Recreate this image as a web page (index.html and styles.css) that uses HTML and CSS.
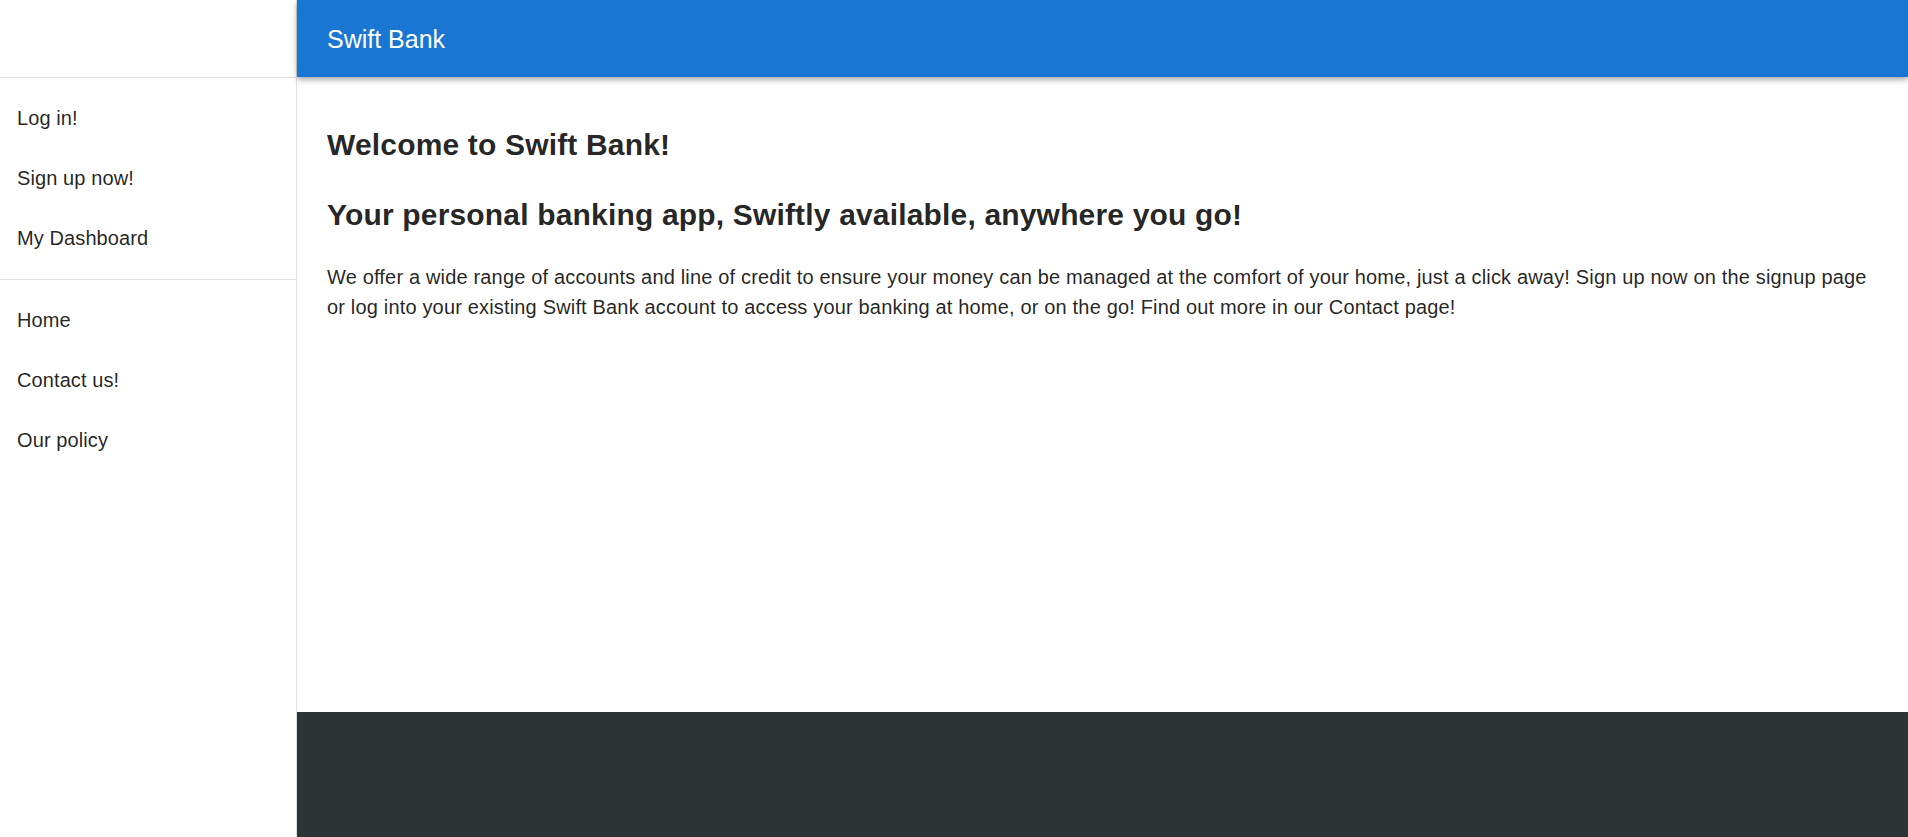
FILE: index.html
```html
<!DOCTYPE html>
<html lang="en">
<head>
<meta charset="utf-8">
<title>Swift Bank</title>
<link rel="stylesheet" href="styles.css">
</head>
<body>
<div class="app">
  <aside class="drawer">
    <div class="drawer-spacer"></div>
    <hr class="divider">
    <ul class="nav-list nav-list-first">
      <li class="nav-item">Log in!</li>
      <li class="nav-item">Sign up now!</li>
      <li class="nav-item">My Dashboard</li>
    </ul>
    <hr class="divider">
    <ul class="nav-list">
      <li class="nav-item">Home</li>
      <li class="nav-item">Contact us!</li>
      <li class="nav-item">Our policy</li>
    </ul>
  </aside>
  <div class="main-col">
    <header class="appbar">
      <div class="appbar-title">Swift Bank</div>
    </header>
    <main class="content">
      <h1 class="title">Welcome to Swift Bank!</h1>
      <h2 class="title title-2">Your personal banking app, Swiftly available, anywhere you go!</h2>
      <p class="body-text">We offer a wide range of accounts and line of credit to ensure your money can be managed at the comfort of your home, just a click away! Sign up now on the signup page or log into your existing Swift Bank account to access your banking at home, or on the go! Find out more in our Contact page!</p>
    </main>
    <footer class="footer"></footer>
  </div>
</div>
</body>
</html>
```

FILE: styles.css
```css
* {
  box-sizing: border-box;
}

html, body {
  margin: 0;
  padding: 0;
  height: 100%;
}

body {
  font-family: "Liberation Sans", Arial, sans-serif;
  color: rgba(0, 0, 0, 0.87);
  background: #fff;
  overflow: hidden;
}

.app {
  display: flex;
  height: 837px;
}

.drawer {
  width: 297px;
  flex: 0 0 297px;
  border-right: 1px solid #e0e0e0;
  background: #fff;
}

.drawer-spacer {
  height: 77px;
}

.divider {
  margin: 0;
  border: 0;
  height: 1px;
  background: #e0e0e0;
}

.nav-list {
  list-style: none;
  margin: 0;
  padding: 10px 0;
}

.nav-list-first {
  padding-bottom: 11px;
}

.nav-item {
  height: 60px;
  display: flex;
  align-items: center;
  padding-left: 17px;
  font-size: 20px;
  line-height: 30px;
  letter-spacing: 0.1px;
}

.main-col {
  flex: 1;
  display: flex;
  flex-direction: column;
  min-width: 0;
}

.appbar {
  height: 77px;
  flex: 0 0 77px;
  background: #1976d2;
  color: #fff;
  display: flex;
  align-items: center;
  padding-left: 30px;
  position: relative;
  z-index: 2;
  box-shadow: 0px 2px 4px -1px rgba(0, 0, 0, 0.2), 0px 4px 5px 0px rgba(0, 0, 0, 0.14), 0px 1px 10px 0px rgba(0, 0, 0, 0.12);
}

.appbar-title {
  font-size: 25px;
  line-height: 1.6;
  font-weight: 400;
}

.content {
  flex: 1;
  padding: 48px 30px 0 30px;
}

.title {
  margin: 0;
  font-size: 30px;
  line-height: 40px;
  font-weight: 700;
  letter-spacing: 0.17px;
  color: rgba(0, 0, 0, 0.87);
}

.title-2 {
  margin-top: 30px;
}

.body-text {
  margin: 27px 0 0 0;
  font-size: 20px;
  line-height: 30px;
  letter-spacing: 0.17px;
}

.footer {
  height: 125px;
  flex: 0 0 125px;
  background: #2d3436;
}
```
